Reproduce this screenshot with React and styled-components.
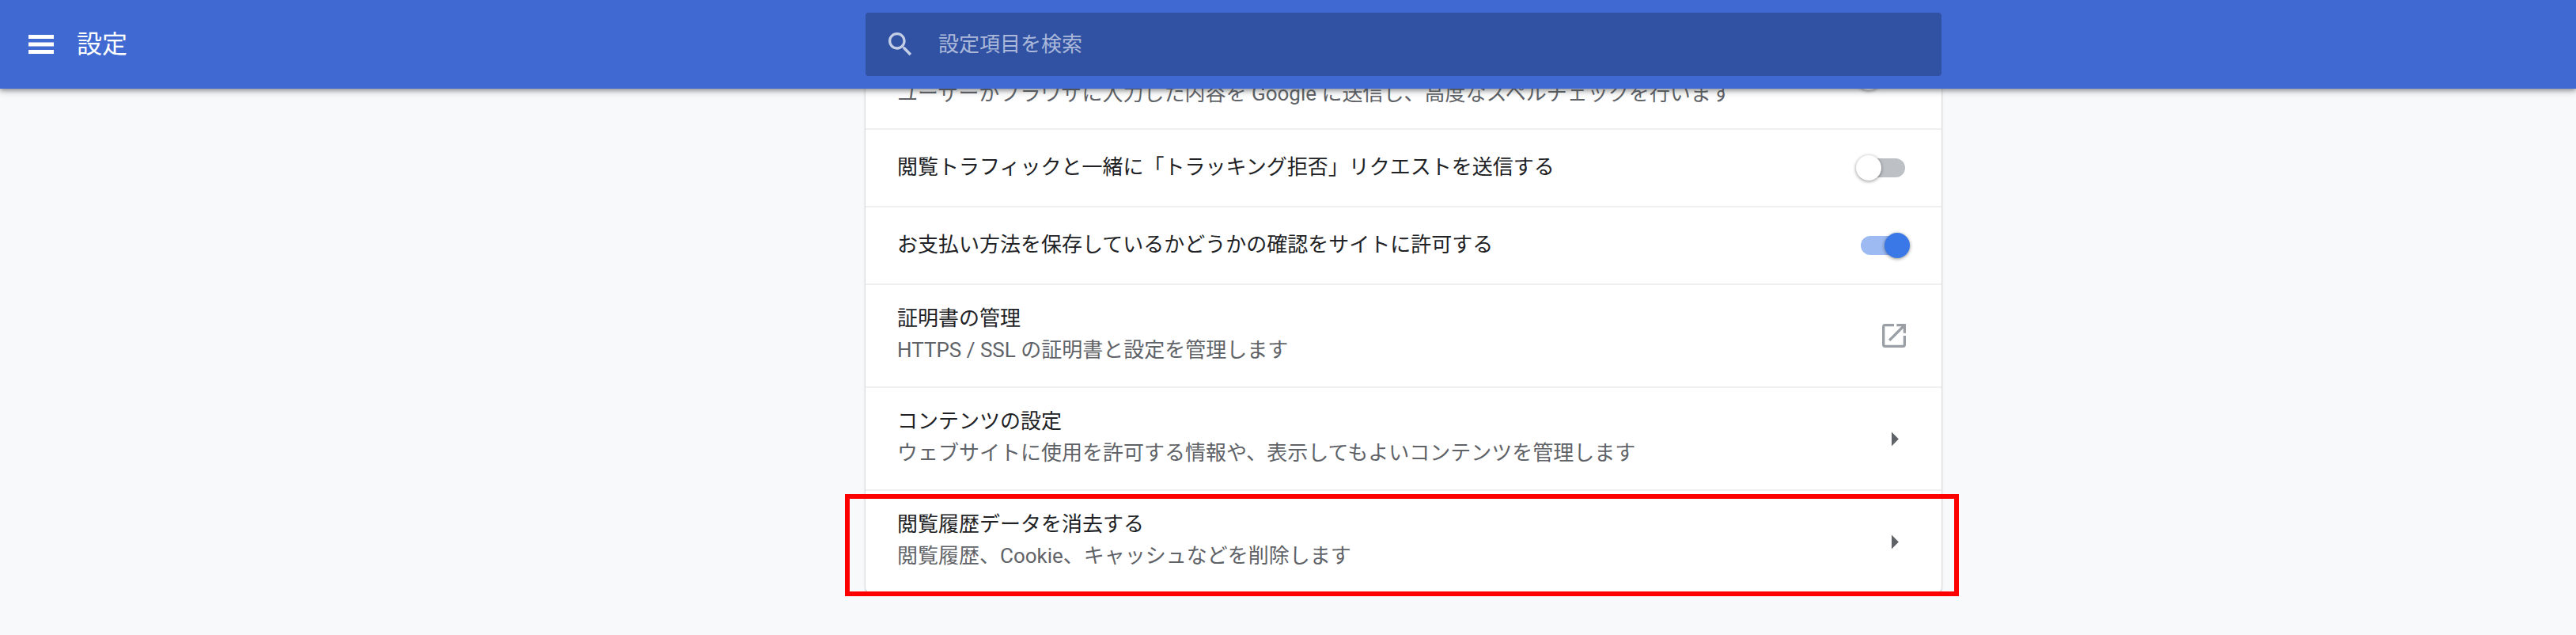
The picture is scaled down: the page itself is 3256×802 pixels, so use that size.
import React from "react";
import styled, { createGlobalStyle } from "styled-components";

const Global = createGlobalStyle`
  html, body { margin: 0; padding: 0; height: 100%; overflow: hidden; background: #f8f9fa; }
  * { box-sizing: border-box; }
  body { font-family: Roboto, "Noto Sans CJK JP", sans-serif; }
`;

const Page = styled.div`
  height: 100vh;
  display: flex;
  flex-direction: column;
  background: #f8f9fa;
`;

const Header = styled.header`
  position: relative;
  z-index: 2;
  flex: 0 0 112px;
  display: grid;
  grid-template-columns: 1094px 1360px;
  align-items: center;
  background: #4069d2;
  box-shadow: 0 2px 6px rgba(60, 64, 67, 0.55), 0 4px 10px rgba(60, 64, 67, 0.15);
`;

const Brand = styled.div`
  display: flex;
  align-items: center;
  padding-left: 36px;
  gap: 29px;
`;

const Title = styled.h1`
  margin: 0;
  font-size: 32px;
  line-height: 40px;
  font-weight: 400;
  color: #fff;
`;

const MenuButton = styled.svg`
  display: block;
  width: 32px;
  height: 24px;
`;

const Search = styled.div`
  height: 80px;
  display: flex;
  align-items: center;
  gap: 28px;
  padding-left: 24px;
  background: #3152a3;
  border-radius: 4px;
`;

const Placeholder = styled.span`
  margin-top: -5px;
  font-size: 26px;
  color: rgba(255, 255, 255, 0.6);
`;

const SearchIcon = styled.svg`
  display: block;
  width: 40px;
  height: 40px;
  fill: #c3cde6;
`;

const Main = styled.main`
  flex: 1;
  overflow: hidden;
  padding-left: 1094px;
`;

const Card = styled.section`
  width: 1360px;
  margin-top: -78px;
  background: #fff;
  border-radius: 0 0 6px 6px;
  box-shadow: 0 1px 3px rgba(60, 64, 67, 0.4);
`;

const Row = styled.div`
  position: relative;
  display: flex;
  align-items: center;
  justify-content: space-between;
  height: ${(p) => (p.$single ? 98 : p.$last ? 128 : 130)}px;
  padding: 0 40px;
  border-bottom: ${(p) => (p.$last ? "none" : "2px solid #f0f0f0")};
`;

const Texts = styled.div`
  display: flex;
  flex-direction: column;
  margin-top: -4px;
  padding-top: ${(p) => (p.$subOnly ? 44 : 0)}px;
`;

const Label = styled.div`
  font-size: 26px;
  line-height: 40px;
  color: #202124;
  white-space: nowrap;
`;

const SingleLabel = styled(Label)`
  margin-top: -3px;
`;

const Sub = styled.div`
  font-size: 26px;
  line-height: 40px;
  color: #5f6368;
  white-space: nowrap;
`;

const Track = styled.div`
  position: relative;
  width: 56px;
  height: 24px;
  margin-right: 6px;
  border-radius: 12px;
  background: ${(p) => (p.$on ? "#9dbbf2" : "#bdc1c6")};
`;

const Thumb = styled.div`
  position: absolute;
  top: -4px;
  ${(p) => (p.$on ? "right: -6px;" : "left: -6px;")}
  width: 32px;
  height: 32px;
  border-radius: 50%;
  background: ${(p) => (p.$on ? "#3b78e7" : "#fff")};
  box-shadow: 0 1px 4px rgba(0, 0, 0, 0.45);
`;

const IconSlot = styled.div`
  width: 40px;
  height: 44px;
  display: flex;
  align-items: center;
  justify-content: center;
  flex: none;
`;

const ExternalIcon = styled.svg`
  display: block;
  flex: none;
  width: 40px;
  height: 40px;
  fill: #9aa0a6;
`;

const ArrowIcon = styled.svg`
  display: block;
  flex: none;
  width: 43px;
  height: 43px;
  fill: #5f6368;
`;

const Highlight = styled.div`
  position: absolute;
  left: -26px;
  right: -22px;
  top: 4px;
  bottom: -5px;
  border: 6px solid #ff0000;
  pointer-events: none;
`;

const Toggle = ({ on }) => (
  <Track $on={on}>
    <Thumb $on={on} />
  </Track>
);

const Arrow = () => (
  <IconSlot>
    <ArrowIcon viewBox="0 0 24 24">
      <path d="M10 17l5-5-5-5v10z" />
    </ArrowIcon>
  </IconSlot>
);

export default function App() {
  return (
    <Page>
      <Global />
      <Header>
        <Brand>
          <MenuButton viewBox="0 0 32 24">
            <path fill="#fff" d="M0 0h32v5H0zM0 9.5h32v5H0zM0 19h32v5H0z" />
          </MenuButton>
          <Title>設定</Title>
        </Brand>
        <Search>
          <SearchIcon viewBox="0 0 24 24">
            <path d="M15.5 14h-.79l-.28-.27C15.41 12.59 16 11.11 16 9.5 16 5.91 13.09 3 9.5 3S3 5.91 3 9.5 5.91 16 9.5 16c1.61 0 3.09-.59 4.23-1.57l.27.28v.79l5 4.99L20.49 19l-4.99-5zm-6 0C7.01 14 5 11.99 5 9.5S7.01 5 9.5 5 14 7.01 14 9.5 11.99 14 9.5 14z" />
          </SearchIcon>
          <Placeholder>設定項目を検索</Placeholder>
        </Search>
      </Header>
      <Main>
        <Card>
          <Row>
            <Texts $subOnly>
              <Sub>ユーザーがブラウザに入力した内容を Google に送信し、高度なスペルチェックを行います</Sub>
            </Texts>
            <Toggle />
          </Row>
          <Row $single>
            <SingleLabel>閲覧トラフィックと一緒に「トラッキング拒否」リクエストを送信する</SingleLabel>
            <Toggle />
          </Row>
          <Row $single>
            <SingleLabel>お支払い方法を保存しているかどうかの確認をサイトに許可する</SingleLabel>
            <Toggle on />
          </Row>
          <Row>
            <Texts>
              <Label>証明書の管理</Label>
              <Sub>HTTPS / SSL の証明書と設定を管理します</Sub>
            </Texts>
            <IconSlot>
              <ExternalIcon viewBox="0 0 24 24">
                <path d="M19 19H5V5h7V3H5c-1.11 0-2 .9-2 2v14c0 1.1.89 2 2 2h14c1.1 0 2-.9 2-2v-7h-2v7zM14 3v2h3.59l-9.83 9.83 1.41 1.41L19 6.41V10h2V3h-7z" />
              </ExternalIcon>
            </IconSlot>
          </Row>
          <Row>
            <Texts>
              <Label>コンテンツの設定</Label>
              <Sub>ウェブサイトに使用を許可する情報や、表示してもよいコンテンツを管理します</Sub>
            </Texts>
            <Arrow />
          </Row>
          <Row $last>
            <Texts>
              <Label>閲覧履歴データを消去する</Label>
              <Sub>閲覧履歴、Cookie、キャッシュなどを削除します</Sub>
            </Texts>
            <Arrow />
            <Highlight />
          </Row>
        </Card>
      </Main>
    </Page>
  );
}
